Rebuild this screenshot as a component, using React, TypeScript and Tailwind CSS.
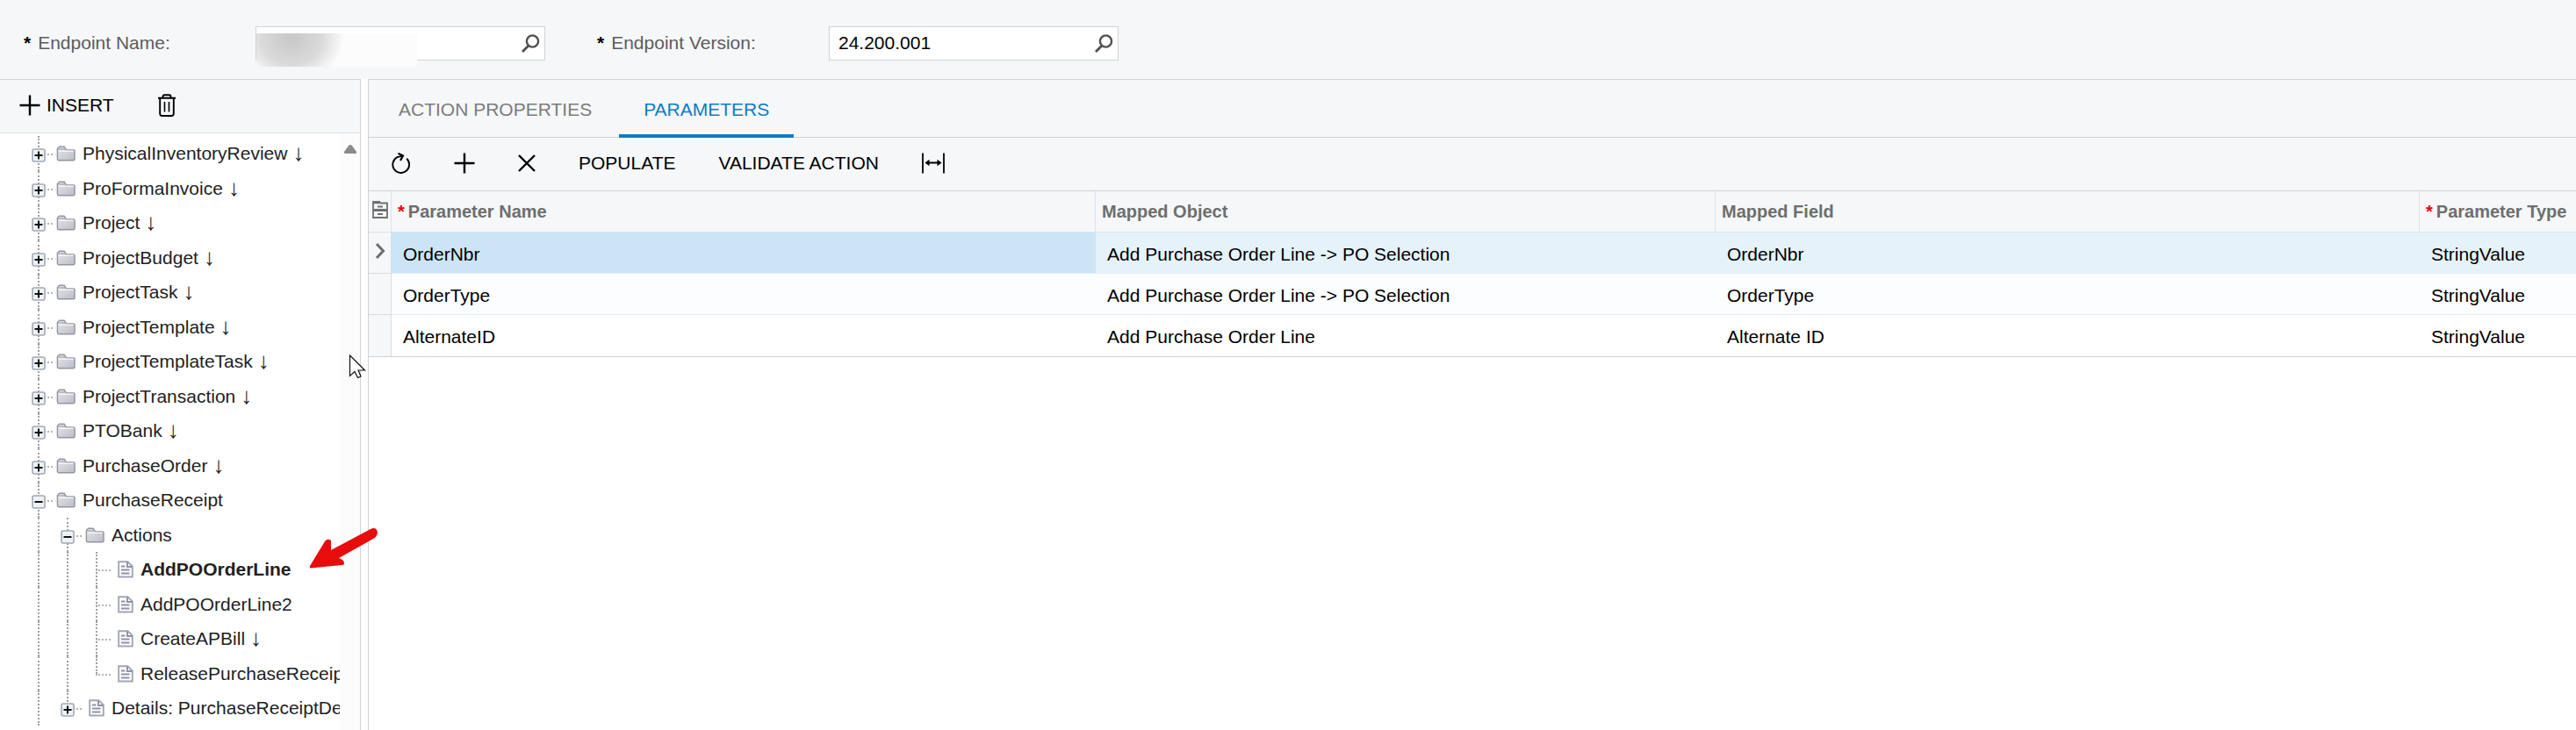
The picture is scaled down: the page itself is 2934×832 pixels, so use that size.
import type { ReactNode } from "react"

interface TreeNode {
    label: string
    depth: number
    kind: "folder" | "doc"
    state?: "open" | "closed"
    arrow?: boolean
    selected?: boolean
    lastChild?: boolean
}

interface Parameter {
    name: string
    mappedObject: string
    mappedField: string
    type: string
}

const nodes: TreeNode[] = [
    { label: "PhysicalInventoryReview", depth: 0, kind: "folder", state: "closed", arrow: true },
    { label: "ProFormaInvoice", depth: 0, kind: "folder", state: "closed", arrow: true },
    { label: "Project", depth: 0, kind: "folder", state: "closed", arrow: true },
    { label: "ProjectBudget", depth: 0, kind: "folder", state: "closed", arrow: true },
    { label: "ProjectTask", depth: 0, kind: "folder", state: "closed", arrow: true },
    { label: "ProjectTemplate", depth: 0, kind: "folder", state: "closed", arrow: true },
    { label: "ProjectTemplateTask", depth: 0, kind: "folder", state: "closed", arrow: true },
    { label: "ProjectTransaction", depth: 0, kind: "folder", state: "closed", arrow: true },
    { label: "PTOBank", depth: 0, kind: "folder", state: "closed", arrow: true },
    { label: "PurchaseOrder", depth: 0, kind: "folder", state: "closed", arrow: true },
    { label: "PurchaseReceipt", depth: 0, kind: "folder", state: "open" },
    { label: "Actions", depth: 1, kind: "folder", state: "open" },
    { label: "AddPOOrderLine", depth: 2, kind: "doc", selected: true },
    { label: "AddPOOrderLine2", depth: 2, kind: "doc" },
    { label: "CreateAPBill", depth: 2, kind: "doc", arrow: true },
    { label: "ReleasePurchaseReceipt", depth: 2, kind: "doc", lastChild: true },
    { label: "Details: PurchaseReceiptDetail", depth: 1, kind: "doc", state: "closed", lastChild: true },
]

const parameters: Parameter[] = [
    { name: "OrderNbr", mappedObject: "Add Purchase Order Line -> PO Selection", mappedField: "OrderNbr", type: "StringValue" },
    { name: "OrderType", mappedObject: "Add Purchase Order Line -> PO Selection", mappedField: "OrderType", type: "StringValue" },
    { name: "AlternateID", mappedObject: "Add Purchase Order Line", mappedField: "Alternate ID", type: "StringValue" },
]

const SearchIcon = () => (
    <svg className="size-6" viewBox="0 0 24 24" fill="none" stroke="#505050" strokeWidth="2.4">
        <circle cx="14.5" cy="9" r="6.6" />
        <path d="M10 14L3 21" strokeWidth="2.8" />
    </svg>
)

const PlusIcon = () => (
    <svg className="size-6" viewBox="0 0 24 24" stroke="#000" strokeWidth="2.4">
        <path d="M12 .5V23.5M.5 12H23.5" />
    </svg>
)

const TrashIcon = () => (
    <svg className="h-[26px] w-5" viewBox="0 0 20 26" fill="none" stroke="#000" strokeWidth="1.9">
        <path d="M0 4.8H20M5.5 4.8V3Q5.5 1.2 7.5 1.2H12.5Q14.5 1.2 14.5 3V4.8M2.2 4.8V22.5Q2.2 25 4.7 25H15.3Q17.8 25 17.8 22.5V4.8" />
        <path d="M7.5 9V20.5M12.5 9V20.5" strokeWidth="1.6" />
    </svg>
)

const RefreshIcon = () => (
    <svg className="h-6 w-[22px]" viewBox="0 0 22 24" fill="none" stroke="#000" strokeWidth="1.9">
        <path d="M17.2 6.800A9.400 9.400 0 1 1 6.500 5.200L12.500 3.600" />
        <path d="M7.500 .800L13 3.500L10 9" strokeWidth="2.2" />
    </svg>
)

const CloseIcon = () => (
    <svg className="size-5" viewBox="0 0 20 20" stroke="#000" strokeWidth="2.4">
        <path d="M1 1L19 19M19 1L1 19" />
    </svg>
)

const FitIcon = () => (
    <svg className="h-6 w-[26px]" viewBox="0 0 26 24" stroke="#000" strokeWidth="1.8">
        <path d="M1 .5V23.5M25 .5V23.5M5 11.5H21" fill="none" />
        <path d="M3.5 11.5L8.5 7.8V15.2ZM22.5 11.5L17.5 7.8V15.2Z" stroke="none" />
    </svg>
)

const CabinetIcon = () => (
    <svg className="h-5 w-[18px]" viewBox="0 0 18 20" fill="none" stroke="#707070" strokeWidth="1.8">
        <path d="M1 19V1H8L9.5 2.5H17V19Z" />
        <path d="M1 10.5H17M1 1.8H9" strokeWidth="3" />
        <path d="M6 6.5H12M6 15H12" strokeWidth="2.2" />
    </svg>
)

const FolderIcon = () => (
    <svg className="h-5 w-6" viewBox="0 0 24 20">
        <defs>
            <linearGradient id="folder" x1="0" y1="0" x2="1" y2="1">
                <stop offset="0" stopColor="#e6e6ea" />
                <stop offset="1" stopColor="#bcbcc6" />
            </linearGradient>
        </defs>
        <path d="M1.5 16V4L4 1.5H10L12.5 5.5H21.5Q23 5.5 23 7V16.5Q23 18.5 21 18.5H3.5Q1.5 18.5 1.5 16Z" fill="url(#folder)" stroke="#9394a3" strokeWidth="1.5" />
        <path d="M2.5 4.5H11" stroke="#9394a3" />
        <path d="M3 7H21.5" stroke="#f6f6f8" strokeWidth="1.5" />
    </svg>
)

const DocIcon = () => (
    <svg className="h-5 w-[18px]" viewBox="0 0 18 20" fill="none" stroke="#8f92a6" strokeWidth="1.9">
        <path d="M1.2 1.2H11.5L16.8 6.5V18.5H1.2Z" fill="#fdfdff" stroke="#a3a6b5" />
        <path d="M11 1.5V7H16.5" />
        <path d="M4 6.500H8.500M4 10.500H13.500M4 14.500H13.500" />
    </svg>
)

const Expander = ({ open }: { open: boolean }) => (
    <svg className="relative size-4" viewBox="0 0 16 16">
        <rect x="1" y="1" width="14" height="14" rx="2" fill="#eff2f5" stroke="#9fabb8" strokeWidth="1.6" />
        <path d={open ? "M3.500 8H12.500" : "M3.500 8H12.500M8 3.500V12.500"} stroke="#111" strokeWidth="2" />
    </svg>
)

const TreeRow = ({ node }: { node: TreeNode }) => (
    <li role="treeitem" aria-selected={!!node.selected} className="flex h-10 items-center even:h-[39px]">
        {/* Líneas de los niveles superiores */}
        {Array.from({ length: node.depth }, (_, level) => (
            <span key={level} className="flex w-[33px] shrink-0 justify-center self-stretch">
                <span className="border-l-2 border-dotted border-[#a0a0a0]" />
            </span>
        ))}
        <span className="relative flex w-[33px] shrink-0 items-center justify-center self-stretch">
            <span className={`absolute left-4 top-0 border-l-2 border-dotted border-[#a0a0a0] ${node.lastChild ? "bottom-1/2" : "bottom-0"}`} />
            <span className="absolute left-4 right-0 top-1/2 border-t-2 border-dotted border-[#b4b4b4]" />
            {node.state && (
                <button aria-label={node.state === "open" ? "Collapse" : "Expand"} className="flex pt-1">
                    <Expander open={node.state === "open"} />
                </button>
            )}
        </span>
        <span className="flex w-[34px] shrink-0 justify-center pr-2 pl-1">
            {node.kind === "folder" ? <FolderIcon /> : <span className="pl-1"><DocIcon /></span>}
        </span>
        <span className={`whitespace-nowrap ${node.selected ? "font-bold" : ""}`}>{node.label}</span>
        {node.arrow && <span className="ml-[6px] font-['Liberation_Serif',serif] text-[26px]">↓</span>}
    </li>
)

const Required = () => <span className="mr-1 text-[#f00000]">*</span>

const ToolButton = ({ label, children }: { label: string, children: ReactNode }) => (
    <button aria-label={label} className="flex h-10 items-center">{children}</button>
)

const Selector = ({ id, label, value, masked }: { id: string, label: string, value: string, masked?: boolean }) => (
    <div className="flex items-center">
        <label htmlFor={id} className="w-[264px] pb-[2px] text-[#5c5c5c]">
            <span className="mr-2 font-bold text-black">*</span>
            {label}
        </label>
        <div className="relative flex h-[39px] w-[330px] items-center border border-[#d0d3d6] bg-white pr-1">
            <input id={id} defaultValue={value} className="w-full min-w-0 bg-transparent pb-px pl-[10px] text-black outline-none" />
            <button aria-label={`Search ${label}`}><SearchIcon /></button>
            {masked && (
                <div className="absolute left-0 top-[7px] h-[38px] w-[183px] overflow-hidden rounded-bl-lg bg-[#fcfcfc]">
                    <div className="h-full w-[100px] bg-[radial-gradient(ellipse_70px_60px_at_40%_15%,#c9c9c9_5%,#dadada_50%,#fcfcfc_85%)]" />
                </div>
            )}
        </div>
    </div>
)

export default function App() {
    return (
        <div className="flex h-screen flex-col overflow-hidden bg-white font-['Liberation_Sans',Arial,sans-serif] text-[21px] leading-6 text-black">
            <header className="flex h-[90px] shrink-0 items-start gap-[59px] bg-[#f5f7f9] pt-[30px] pl-[27px]">
                <Selector id="endpoint-name" label="Endpoint Name:" value="" masked />
                <Selector id="endpoint-version" label="Endpoint Version:" value="24.200.001" />
            </header>

            <div className="flex min-h-0 flex-1 gap-2">
                {/* Árbol de entidades */}
                <aside className="relative flex w-[411px] shrink-0 flex-col border-t border-r border-[#d0d3d6]">
                    <div className="flex h-[61px] shrink-0 items-center gap-[50px] border-b border-[#dcdfe2] bg-[#f5f7f9] pb-[2px] pl-[22px]">
                        <button className="flex items-center gap-[7px]"><PlusIcon />INSERT</button>
                        <ToolButton label="Delete"><TrashIcon /></ToolButton>
                    </div>
                    <div className="flex min-h-0 flex-1">
                        <ul role="tree" className="min-w-0 flex-1 overflow-hidden pt-[3px] pl-[27px] text-[#222]">
                            {nodes.map(node => <TreeRow key={node.label} node={node} />)}
                        </ul>
                        <div className="flex w-[23px] justify-center bg-[#fcfcfc] pt-3">
                            <svg className="h-3 w-4" viewBox="0 0 16 12" fill="#8b8b8b">
                                <path d="M8 1Q9 1 10 2L15 9Q15.5 11 14 11H2Q.5 11 1 9L6 2Q7 1 8 1Z" />
                            </svg>
                        </div>
                    </div>

                    {/* Flecha de anotación y cursor */}
                    <svg className="absolute left-[350px] top-[507px] z-10 h-[50px] w-[84px]" viewBox="0 0 84 50" fill="#e80c0c">
                        <path d="M3 47L20 19Q23 15 27 18L27 29L72 5Q79 2 80 9Q80 12 77 15L36 38Q42 40 42 44Q42 46 39 46L4 49.500Q2 49 3 47Z" />
                    </svg>
                    <svg className="absolute left-[397px] top-[313px] z-10 h-7 w-5" viewBox="0 0 20 28" fill="#fff" stroke="#111" strokeWidth="1.2">
                        <path d="M1.5 1V24.5L7 19.5L10.5 26.5L14 25L11 18H18.5Z" />
                    </svg>
                </aside>

                <main className="min-w-0 flex-1 border-t border-l border-[#d0d3d6]">
                    <div role="tablist" className="flex h-[66px] border-b border-[#d0d3d6] bg-[#f5f7f9] pl-[7px]">
                        <button role="tab" aria-selected={false} className="pt-[2px] pr-[31px] pl-[27px] text-[#7c7c7c]">ACTION PROPERTIES</button>
                        <button role="tab" aria-selected className="-mb-px border-b-4 border-[#0f7bc4] px-7 pt-[5px] text-[#0f7bc4]">PARAMETERS</button>
                    </div>

                    <div className="flex h-[61px] items-center gap-[49px] border-b border-[#d0d3d6] bg-[#f5f7f9] pb-[2px] pl-[26px]">
                        <ToolButton label="Refresh"><RefreshIcon /></ToolButton>
                        <ToolButton label="Add row"><PlusIcon /></ToolButton>
                        <ToolButton label="Delete row"><CloseIcon /></ToolButton>
                        <button>POPULATE</button>
                        <button>VALIDATE ACTION</button>
                        <ToolButton label="Fit to screen"><FitIcon /></ToolButton>
                    </div>

                    <table className="w-full table-fixed border-separate border-spacing-0 border-b border-[#d0d3d6] text-left">
                        <thead className="bg-[#f5f7f9] text-[20px] text-[#6e6e6e]">
                            <tr className="h-[47px] *:border-b *:border-[#dce3ea] *:p-0">
                                <th className="w-[26px] border-r"><div className="flex justify-center pb-1"><CabinetIcon /></div></th>
                                <th className="w-[802px] border-r"><span className="pl-[7px]"><Required />Parameter Name</span></th>
                                <th className="w-[706px] border-r"><span className="pl-[7px]">Mapped Object</span></th>
                                <th className="w-[802px] border-r"><span className="pl-[7px]">Mapped Field</span></th>
                                <th><span className="pl-[7px]"><Required />Parameter Type</span></th>
                            </tr>
                        </thead>
                        <tbody>
                            {parameters.map((parameter, index) => (
                                <tr
                                    key={parameter.name}
                                    className="h-[47px] *:border-b *:border-[#e3eff8] *:px-[13px] *:pt-[3px] first:bg-[#e5f2fa] even:bg-[#fbfdff] last:*:border-b-0"
                                >
                                    <td className="border-r border-[#d9dde1]! bg-[#f5f7f9] px-0! pt-0! pb-1">
                                        {index === 0 && (
                                            <svg className="mx-auto h-[18px] w-3" viewBox="0 0 12 18" fill="none" stroke="#6e6e6e" strokeWidth="3">
                                                <path d="M2 1L9.500 9L2 17" />
                                            </svg>
                                        )}
                                    </td>
                                    <td className={index === 0 ? "bg-[#cbe4f6]" : ""}>{parameter.name}</td>
                                    <td>{parameter.mappedObject}</td>
                                    <td>{parameter.mappedField}</td>
                                    <td>{parameter.type}</td>
                                </tr>
                            ))}
                        </tbody>
                    </table>
                </main>
            </div>
        </div>
    )
}
